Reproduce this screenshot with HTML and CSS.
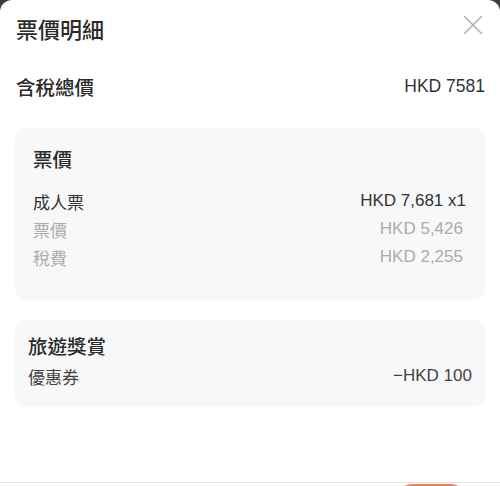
FILE: index.html
```html
<!DOCTYPE html>
<html lang="zh-Hant">
<head>
    <meta charset="UTF-8">
    <title>票價明細</title>
    <link rel="stylesheet" href="styles.css">
</head>
<body>
<div class="sheet">
    <div class="content">
        <div class="header">
            <h1 class="title">票價明細</h1>
            <div class="close">
                <svg width="20" height="20" viewBox="0 0 20 20">
                    <path d="M1 1L19 19M19 1L1 19" stroke="#b3b3b3" stroke-width="1.6" fill="none"/>
                </svg>
            </div>
        </div>

        <div class="total">
            <span class="total-label">含稅總價</span>
            <span class="total-value">HKD 7581</span>
        </div>

        <div class="card fare">
            <div class="card-title">票價</div>
            <div class="row">
                <span>成人票</span>
                <span>HKD 7,681 x1</span>
            </div>
            <div class="row sub">
                <span>票價</span>
                <span class="val">HKD 5,426</span>
            </div>
            <div class="row sub">
                <span>稅費</span>
                <span class="val">HKD 2,255</span>
            </div>
        </div>

        <div class="card reward">
            <div class="card-title">旅遊獎賞</div>
            <div class="row">
                <span>優惠券</span>
                <span>−HKD 100</span>
            </div>
        </div>
    </div>

    <div class="footer">
        <div class="btn"></div>
    </div>
</div>
</body>
</html>
```

FILE: styles.css
```css
* {
    box-sizing: border-box;
}

body {
    margin: 0;
    background-color: #3c3c3c;
    font-family: "Liberation Sans", "Noto Sans CJK TC", sans-serif;
    color: #333;
}

.sheet {
    height: 486px;
    background: #fff;
    border-radius: 12px 12px 0 0;
    overflow: hidden;
}

.content {
    height: 482px;
    padding: 0 15px;
}

.header {
    display: flex;
    justify-content: space-between;
    align-items: flex-start;
    padding: 19px 0 0 1px;
}

.title {
    margin: 0;
    font-size: 22px;
    line-height: 24px;
    font-weight: 500;
    color: #2a2a2a;
}

.close {
    width: 20px;
    height: 20px;
    margin: -4px 2px 0 0;
}

.total {
    display: flex;
    justify-content: space-between;
    align-items: center;
    height: 28px;
    margin: 29px 0 28px 1px;
}

.total-label {
    font-size: 19.5px;
    font-weight: 500;
    color: #2a2a2a;
}

.total-value {
    font-size: 17.5px;
    color: #333;
}

.card {
    background: #f8f8f8;
    border-radius: 10px;
}

.fare {
    padding: 19px 19px 29px 18px;
}

.reward {
    margin-top: 20px;
    padding: 14px 13px 17px 13px;
}

.card-title {
    font-size: 19.5px;
    line-height: 26px;
    font-weight: 500;
    color: #2a2a2a;
}

.fare .card-title {
    margin-bottom: 14px;
}

.row {
    display: flex;
    justify-content: space-between;
    align-items: center;
    height: 28px;
    font-size: 17px;
    color: #333;
}

.reward .row {
    margin-top: 2px;
    color: #444;
}

.row.sub {
    color: #acacac;
}

.row.sub .val {
    margin-right: 3px;
}

.footer {
    border-top: 1px solid #e6e6e6;
    padding-top: 1px;
    display: flex;
    justify-content: flex-end;
    padding-right: 35px;
}

.btn {
    width: 67px;
    height: 40px;
    background: #f0835b;
    border-radius: 14px;
}
```
